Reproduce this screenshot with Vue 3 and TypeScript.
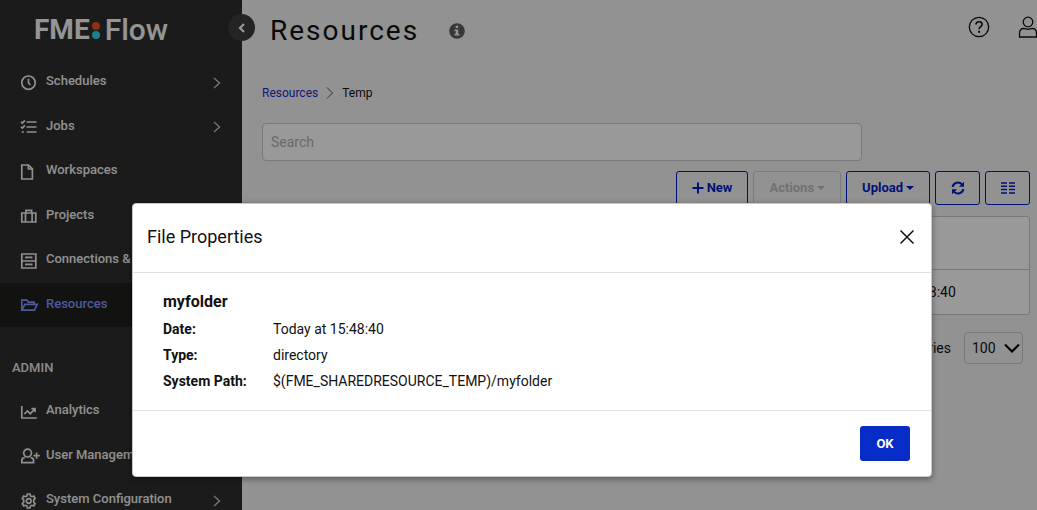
<script setup lang="ts">
import { ref } from 'vue'

interface NavItem {
  label: string
  icon: string
  expandable?: boolean
  active?: boolean
}

const mainNav: NavItem[] = [
  { label: 'Schedules', icon: 'clock', expandable: true },
  { label: 'Jobs', icon: 'tasks', expandable: true },
  { label: 'Workspaces', icon: 'file' },
  { label: 'Projects', icon: 'case' },
  { label: 'Connections & Parameters', icon: 'cabinet' },
  { label: 'Resources', icon: 'folder', active: true },
]

const adminNav: NavItem[] = [
  { label: 'Analytics', icon: 'chart' },
  { label: 'User Management', icon: 'user' },
  { label: 'System Configuration', icon: 'gear', expandable: true },
]

const groups = [
  { title: '', items: mainNav },
  { title: 'ADMIN', items: adminNav },
]

const icons: Record<string, string> = {
  clock: 'M7.500 1a6.700 6.700 0 1 0 0 13.400A6.700 6.700 0 0 0 7.500 1zM7.500 3.800v4.200l2 2',
  tasks: 'M5.500 3h10M5.500 8h10M5.500 13h10M0 2.800l1.400 1.300L3.900 1.400M0 7.800l1.400 1.300 2.500-2.700M.7 13h2.200',
  file: 'M.8 1h6.800l3.800 3.800V15H.8zM7.400 1v4h4',
  case: 'M.8 5h14v9h-14zM5 5V2.400h5.600V5M4.500 5v9M11.100 5v9',
  cabinet: 'M.8 1h14v14h-14zM.8 8h14M5 5.600V4.400h5.600v1.200M5 12.600v-1.200h5.600v1.200',
  folder: 'M.8 12.600V3.200h5l1.600 1.900H13v2.200M.8 13.200L4 7.300h12.200l-2.800 5.900z',
  chart: 'M.8 2v12h15M3.400 10l3-3 2.800 2.800 4.200-4.400M10.400 4.600H14v3.600',
  user: 'M6.600 1.200a3.900 3.900 0 1 0 0 7.800 3.900 3.900 0 0 0 0-7.800zM3.800 9.600C2 9.800.8 11 .8 12.400v2.200h11.800v-2.200c0-1.400-1.200-2.600-3-2.800M12.400 7.600h6.400M15.600 4.400v6.400',
  gear: 'M6.400 1H9l.5 2 1.300.7 2-.6 1.300 2.300L12.700 6.900v2.200l1.400 1.500-1.300 2.300-2-.6-1.300.7-.5 2H6.400l-.5-2-1.300-.7-2 .6-1.300-2.300L2.700 9.100V6.900L1.300 5.400l1.300-2.300 2 .6L5.900 3zM7.700 5.700a2.300 2.300 0 1 0 0 4.600 2.300 2.300 0 0 0 0-4.600z',
}

const properties = [
  { name: 'Date:', value: 'Today at 15:48:40' },
  { name: 'Type:', value: 'directory' },
  { name: 'System Path:', value: '$(FME_SHAREDRESOURCE_TEMP)/myfolder' },
]

const search = ref('')
const pageSize = ref('100')
const open = ref(true)
</script>

<template>
  <div class="app">
    <aside class="sidebar">
      <div class="logo">
        <span class="logo-fme">FME</span>
        <span class="logo-dots"><i class="dot red"></i><i class="dot teal"></i></span>
        <span class="logo-flow">Flow</span>
      </div>
      <button class="collapse" type="button" aria-label="Collapse menu">
        <svg width="8" height="10" viewBox="0 0 8 10"><path d="M6 1L2 5l4 4" fill="none" stroke="currentColor" stroke-width="2.2" /></svg>
      </button>
      <nav v-for="group in groups" :key="group.title" class="group">
        <h2 v-if="group.title" class="group-title">{{ group.title }}</h2>
        <ul class="nav-list">
          <li v-for="item in group.items" :key="item.label">
            <a href="#" class="nav-link" :class="{ active: item.active }">
              <svg class="nav-icon" width="16" height="16" viewBox="0 0 16 16"><path :d="icons[item.icon]" /></svg>
              <span class="nav-label">{{ item.label }}</span>
              <svg v-if="item.expandable" class="nav-arrow" width="8" height="12" viewBox="0 0 8 12"><path d="M1 1l5.5 5L1 11" /></svg>
            </a>
          </li>
        </ul>
      </nav>
    </aside>

    <main class="main">
      <header class="header">
        <h1>Resources</h1>
        <svg class="info" width="16" height="16" viewBox="0 0 16 16">
          <circle cx="8" cy="8" r="7.8" fill="#5e5e5e" />
          <path d="M6.7 2.8h2.5v2.3H6.7zM5.5 6.4h3.7v4.4h1.2v1.7H5.5v-1.7h1.2V8.1H5.5z" fill="#f5f5f5" />
        </svg>
        <div class="header-actions">
          <button type="button" class="icon-button" aria-label="Help">
            <svg width="22" height="22" viewBox="0 0 22 22" fill="none" stroke="currentColor">
              <circle cx="11" cy="11" r="9.7" stroke-width="1.3" />
              <path d="M8 8.6c0-1.8 1.3-2.8 3.1-2.8s3 1 3 2.6c0 2.4-3 2.3-3 4.8" stroke-width="1.6" />
              <path d="M10.1 15.8h2" stroke-width="2" />
            </svg>
          </button>
          <button type="button" class="icon-button" aria-label="Account">
            <svg width="20" height="22" viewBox="0 0 20 22" fill="none" stroke="currentColor" stroke-width="1.3">
              <circle cx="10" cy="6" r="4.8" />
              <path d="M1.5 21v-3.500c0-3 1.800-5 4.300-5 1.500 0 2.400.8 4.200.8s2.700-.8 4.200-.8c2.500 0 4.300 2 4.300 5V21z" />
            </svg>
          </button>
        </div>
      </header>

      <nav class="breadcrumb" aria-label="Breadcrumb">
        <a href="#">Resources</a>
        <svg width="8" height="12" viewBox="0 0 8 12"><path d="M1 .5L6.500 6 1 11.500" fill="none" stroke="#555" /></svg>
        <span>Temp</span>
      </nav>

      <input v-model="search" class="search" type="text" placeholder="Search" aria-label="Search" />

      <div class="toolbar">
        <button type="button" class="tool new">
          <svg width="12" height="12" viewBox="0 0 12 12"><path d="M6 .5v11M.5 6h11" stroke="currentColor" stroke-width="2" /></svg>
          New
        </button>
        <button type="button" class="tool actions" disabled>Actions<i class="caret"></i></button>
        <button type="button" class="tool upload">Upload<i class="caret"></i></button>
        <button type="button" class="tool square" aria-label="Refresh">
          <svg width="14" height="14" viewBox="0 0 14 14">
            <path d="M1.600 6A5.400 5.400 0 0 1 11 3.400M12.400 8A5.400 5.400 0 0 1 3 10.600" fill="none" stroke="currentColor" stroke-width="2" />
            <path d="M13 .8v5H8zM1 13.200v-5h5z" fill="currentColor" />
          </svg>
        </button>
        <button type="button" class="tool square" aria-label="Columns">
          <svg width="14" height="12" viewBox="0 0 14 12"><path d="M0 1h6M8 1h6M0 4.300h6M8 4.300h6M0 7.600h6M8 7.600h6M0 11h6M8 11h6" stroke="currentColor" stroke-width="1.500" /></svg>
        </button>
      </div>

      <table class="files">
        <thead>
          <tr><th>Name</th><th class="date">Date</th></tr>
        </thead>
        <tbody>
          <tr><td>myfolder</td><td class="date">Today at 15:48:40</td></tr>
        </tbody>
      </table>

      <div class="pager">
        <label for="page-size">entries</label>
        <span class="select-wrap">
          <select id="page-size" v-model="pageSize">
            <option>100</option>
          </select>
          <svg width="16" height="10" viewBox="0 0 16 10"><path d="M1 1.500l7 7 7-7" fill="none" stroke="#000" stroke-width="2" /></svg>
        </span>
      </div>
    </main>

    <div v-if="open" class="overlay">
      <section class="dialog" role="dialog" aria-labelledby="dialog-title">
        <header class="dialog-head">
          <h2 id="dialog-title">File Properties</h2>
          <button type="button" class="close" aria-label="Close" @click="open = false">
            <svg width="16" height="16" viewBox="0 0 16 16"><path d="M1.500 1.500l13 13M14.500 1.500l-13 13" stroke="#111" stroke-width="1.500" /></svg>
          </button>
        </header>
        <div class="dialog-body">
          <h3>myfolder</h3>
          <dl>
            <div v-for="p in properties" :key="p.name" class="property">
              <dt>{{ p.name }}</dt>
              <dd>{{ p.value }}</dd>
            </div>
          </dl>
        </div>
        <footer class="dialog-foot">
          <button type="button" class="ok" @click="open = false">OK</button>
        </footer>
      </section>
    </div>
  </div>
</template>

<style>
body {
  margin: 0;
  overflow: hidden;
}
</style>

<style scoped>
* {
  box-sizing: border-box;
}
.app {
  position: relative;
  display: flex;
  height: 100vh;
  overflow: hidden;
  background: #f4f4f4;
  color: #111;
  font: 14px/20px Roboto, "Liberation Sans", sans-serif;
}
h1, h2, h3, ul, dl, dd {
  margin: 0;
  padding: 0;
  font-weight: 400;
}
button, input, select {
  font: inherit;
  color: inherit;
}
button {
  cursor: pointer;
}
a {
  text-decoration: none;
}
.sidebar {
  position: relative;
  flex: 0 0 242px;
  background: #2d2d2d;
}
.logo {
  display: flex;
  align-items: center;
  height: 60px;
  padding-left: 34px;
  color: #f8f8f8;
  font-size: 30px;
  font-weight: 500;
  line-height: 32px;
}
.logo-fme {
  font-size: 28px;
  font-weight: 700;
}
.logo-dots {
  display: flex;
  flex-direction: column;
  gap: 1px;
  margin: 0 5px 0 2px;
}
.dot {
  width: 8px;
  height: 8px;
  border-radius: 50%;
}
.red {
  background: #e8501c;
}
.teal {
  background: #37d3ee;
}
.collapse {
  position: absolute;
  top: 14px;
  right: -13px;
  z-index: 1;
  display: grid;
  place-items: center;
  width: 27px;
  height: 27px;
  padding: 0;
  border: 0;
  border-radius: 50%;
  background: #3d3d3d;
  color: #fff;
}
.group-title {
  padding: 31px 12px 11px;
  color: #e6e6e6;
  font-size: 13px;
  font-weight: 500;
}
.nav-list {
  list-style: none;
}
.nav-link {
  display: flex;
  align-items: center;
  gap: 9px;
  height: 45px;
  padding: 0 21px;
  color: #f0f0f0;
  font-size: 13px;
  font-weight: 500;
}
li:nth-child(even) .nav-link {
  height: 44px;
}
.nav-link.active {
  background: #1e1e1c;
  color: #8296ff;
}
.nav-icon {
  flex: none;
  overflow: visible;
  fill: none;
  stroke: currentColor;
  stroke-width: 1.7;
}
.nav-label {
  flex: 1;
  padding-bottom: 3px;
  white-space: nowrap;
}
.nav-arrow {
  fill: none;
  stroke: #c8c8c8;
  stroke-width: 1.3;
}
.main {
  flex: 1;
  min-width: 0;
  padding: 0 7px 0 20px;
}
.header {
  display: flex;
  align-items: center;
  height: 62px;
  padding-left: 8px;
}
h1 {
  font-size: 28px;
  line-height: 36px;
  letter-spacing: 2px;
}
.info {
  margin-left: 30px;
}
.header-actions {
  display: flex;
  gap: 28px;
  margin: 0 -8px 8px auto;
}
.icon-button {
  display: flex;
  padding: 0;
  border: 0;
  background: none;
}
.breadcrumb {
  display: flex;
  align-items: center;
  gap: 8px;
  height: 61px;
  font-size: 12px;
}
.breadcrumb a {
  color: #1a2bc7;
}
.search {
  display: block;
  width: 600px;
  height: 38px;
  padding: 0 8px;
  border: 1px solid #c8c8c8;
  border-radius: 4px;
  background: #fff;
}
.search::placeholder {
  color: #b0b0b0;
  opacity: 1;
}
.toolbar {
  display: flex;
  justify-content: flex-end;
  gap: 5px;
  margin-top: 10px;
}
.tool {
  display: flex;
  align-items: center;
  justify-content: center;
  gap: 3px;
  height: 34px;
  padding: 0 15px;
  border: 1px solid #001fc7;
  border-radius: 3px;
  background: none;
  color: #001fc7;
  font-size: 13px;
  font-weight: 700;
}
.tool:disabled {
  border-color: #cfcfcf;
  color: #bdbdbd;
}
.square {
  width: 45px;
  padding: 0;
}
.caret {
  border: 4px solid transparent;
  border-top-color: currentColor;
  border-bottom: 0;
}
.files {
  width: 100%;
  margin-top: 11px;
  border: 1px solid #c8c8c8;
  border-radius: 3px;
  border-spacing: 0;
  background: #fff;
}
.files th {
  height: 53px;
  padding: 0 16px;
  border-bottom: 1px solid #c8c8c8;
  text-align: left;
}
.files td {
  height: 44px;
  padding: 0 16px;
}
.files .date {
  width: 200px;
}
.pager {
  display: flex;
  justify-content: flex-end;
  align-items: center;
  gap: 13px;
  padding: 17px 7px 0 0;
}
.select-wrap {
  display: grid;
  align-items: center;
}
.select-wrap > * {
  grid-area: 1 / 1;
}
.select-wrap svg {
  justify-self: end;
  margin-right: 3px;
  pointer-events: none;
}
select {
  width: 59px;
  height: 32px;
  padding: 0 7px;
  border: 1px solid #c8c8c8;
  border-radius: 4px;
  appearance: none;
  background: none;
}
.overlay {
  position: absolute;
  inset: 0;
  z-index: 2;
  background: rgba(0, 0, 0, 0.4);
}
.dialog {
  position: absolute;
  top: 203px;
  left: 132px;
  width: 800px;
  border: 1px solid #c8c8c8;
  border-radius: 4px;
  background: #fff;
  box-shadow: 0 2px 6px rgba(0, 0, 0, 0.4);
}
.dialog-head {
  display: flex;
  align-items: center;
  justify-content: space-between;
  height: 69px;
  padding: 0 16px 2px 14px;
  border-bottom: 1px solid #dee2e6;
}
.dialog-head h2 {
  font-size: 18px;
  line-height: 24px;
}
.close {
  display: flex;
  padding: 0;
  border: 0;
  background: none;
}
.dialog-body {
  padding: 15px 30px 16px;
}
.dialog-body h3 {
  font-size: 16px;
  font-weight: 700;
  line-height: 28px;
}
.property {
  display: flex;
  line-height: 26px;
}
dt {
  width: 110px;
  font-weight: 700;
}
.dialog-foot {
  display: flex;
  justify-content: flex-end;
  padding: 15px 21px;
  border-top: 1px solid #dee2e6;
}
.ok {
  width: 50px;
  height: 35px;
  padding: 0;
  border: 0;
  border-radius: 3px;
  background: #072bc7;
  color: #fff;
  font-size: 13px;
  font-weight: 700;
}
</style>
